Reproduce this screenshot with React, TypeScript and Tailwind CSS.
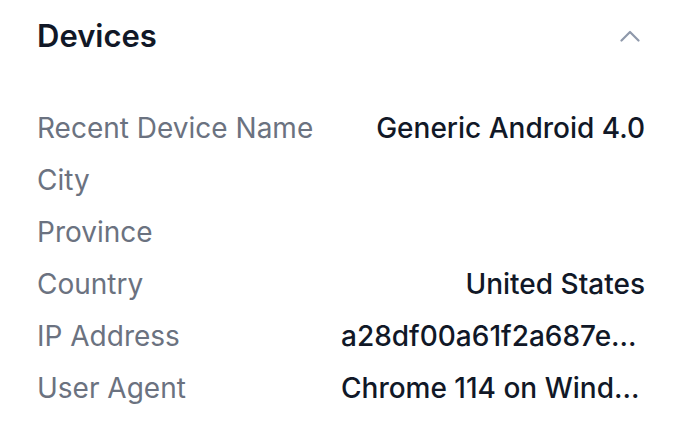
const rows = [
  { label: "Recent Device Name", value: "Generic Android 4.0" },
  { label: "City", value: "" },
  { label: "Province", value: "" },
  { label: "Country", value: "United States" },
  { label: "IP Address", value: "a28df00a61f2a687e0c4b1d93" },
  { label: "User Agent", value: "Chrome 114 on Windows 10" },
];

export default function App() {
  return (
    <div className="w-[680px] h-[432px] bg-white pl-[37px] pr-[35px] font-['Inter',sans-serif]">
      {/* Header */}
      <div className="h-[72px] flex items-center justify-between">
        <h2 className="text-[31px] font-semibold text-[#111827]">Devices</h2>
        <svg width="20" height="12" viewBox="0 0 20 12" fill="none" className="mr-[5px]">
          <polyline points="1.5,10.5 10,2 18.5,10.5" stroke="#8f99ab" strokeWidth="2.2" strokeLinecap="round" strokeLinejoin="round" />
        </svg>
      </div>

      {/* Details */}
      <div className="mt-[30px] flex flex-col">
        {rows.map((row) => (
          <div key={row.label} className="h-[52px] flex items-center justify-between text-[28px]">
            <span className="text-[#6b7280]">{row.label}</span>
            <span className="max-w-[304px] truncate font-medium text-[#111827]">{row.value}</span>
          </div>
        ))}
      </div>
    </div>
  );
}
